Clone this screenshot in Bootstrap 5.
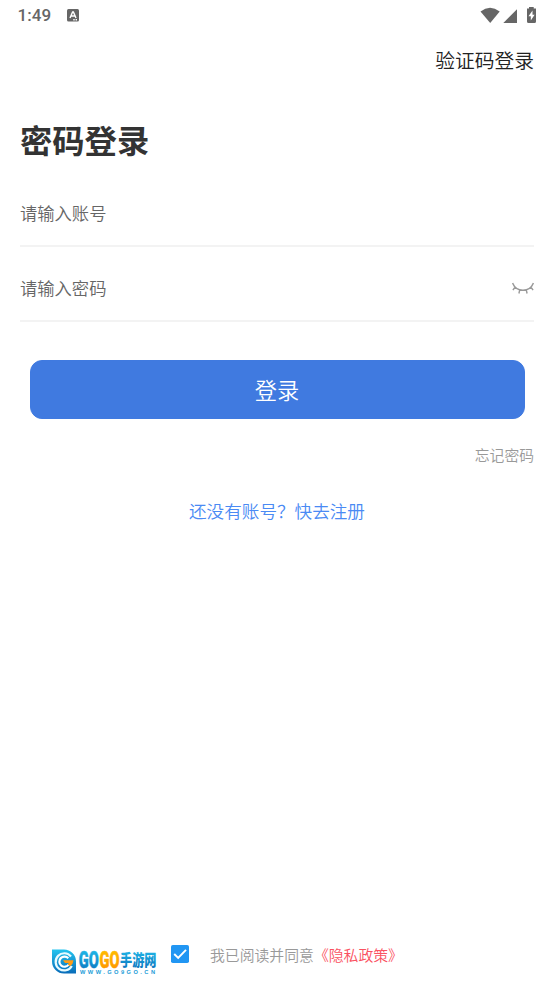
<!DOCTYPE html>
<html lang="zh-CN">
<head>
<meta charset="utf-8">
<meta name="viewport" content="width=device-width, initial-scale=1">
<title>密码登录</title>
<link rel="stylesheet" href="https://cdn.jsdelivr.net/npm/bootstrap@5.3.0/dist/css/bootstrap.min.css">
<style>
body{font-family:"Noto Sans CJK SC",sans-serif;font-weight:350;color:#333;background:#fff}
.screen{height:984px;overflow:hidden}
.status-bar{height:31px;padding:0 17px 0 17.5px;color:#666}
.status-icons{margin-bottom:2px}
.clock{font:500 17px/31px Roboto,sans-serif;letter-spacing:.1px}
.form-area{padding:0 20px}
.code-login{font-size:19.75px;line-height:30px;margin-top:14px;color:#222}
.page-title{font-size:32.3px;line-height:48px;margin-top:40px;color:#333}
.field{height:75px;border-bottom:2px solid #f3f3f3}
.first-field{height:66px;margin-top:18px}
.second-field{padding-top:8px}
.field .form-control{font-size:17.3px;line-height:26px;font-weight:350;color:#666}
.field .form-control::placeholder{color:#666;opacity:1}
.field .form-control:focus{box-shadow:none}
.eye-closed{margin-top:2px}
.login-btn{margin:38px 9.5px 0;height:59px;border-radius:12px;font-size:22.2px;line-height:32px;font-weight:350;padding:0 0 1px;--bs-btn-bg:#407ae0;--bs-btn-border-color:#407ae0}
.forgot{font-size:14.8px;line-height:22px;margin-top:25px;color:#999}
.register{font-size:17.6px;line-height:26px;margin-top:32px;color:#4a8af4}
.agreement{height:40px;margin-bottom:4px;padding-left:51px;font-size:14.85px;color:#999}
.brand{margin-top:4px;overflow:visible}
.agree-check{width:18px;height:18px;margin:5px 21px 0 14px}
.agree-text{line-height:22px;margin-top:4px}
.policy{color:#fa5161}
</style>
<script src="https://cdn.jsdelivr.net/npm/bootstrap@5.3.0/dist/js/bootstrap.bundle.min.js"></script>
</head>
<body>
<div class="screen d-flex flex-column">
  <header class="status-bar d-flex align-items-center flex-shrink-0">
    <span class="clock">1:49</span>
    <svg class="ms-3" width="12" height="13" viewBox="0 0 12 13"><rect width="12" height="12.6" rx="1.5" fill="#666"/><path d="M3 9 5.6 3h.8L9 9M4 7h4M6.3 10.8h1.4M8.6 10.8H10" fill="none" stroke="#fff" stroke-width="1.4"/></svg>
    <svg class="status-icons ms-auto" width="57" height="18" viewBox="0 0 57 18"><g fill="#666"><path d="M.5 5.4Q10 -1.8 19.7 5.4L10.2 17z"/><path d="M23.3 17 37 3.2V17z"/><path d="M49 2.6V1h4.7v1.6H56V15.5Q56 17 54.5 17h-6Q47 17 47 15.5V2.6z"/></g><path d="m52.5 4.5-4 5.8h2.3v4.2l3.8-5.8h-2.1z" fill="#fff"/></svg>
  </header>
  <main class="d-flex flex-column flex-grow-1">
    <section class="form-area d-flex flex-column">
      <a class="code-login align-self-end text-decoration-none" href="#">验证码登录</a>
      <h1 class="page-title fw-bold mb-0">密码登录</h1>
      <form class="d-flex flex-column">
        <div class="field first-field d-flex align-items-center">
          <input class="form-control border-0 p-0 bg-transparent" type="text" placeholder="请输入账号" aria-label="账号">
        </div>
        <div class="field second-field d-flex align-items-center">
          <input class="form-control border-0 p-0 bg-transparent" type="password" placeholder="请输入密码" aria-label="密码">
          <svg class="eye-closed flex-shrink-0" width="22" height="13" viewBox="0 0 22 13" fill="none" stroke="#999" stroke-width="1.4"><path d="M.6 1C2.2 5 6 8.2 11 8.2S19.8 5 21.4 1M3.2 5 .9 8.2M18.8 5l2.3 3.2M7.8 7.7 6.9 11.5M14.2 7.7l.9 3.8"/></svg>
        </div>
        <button class="login-btn btn btn-primary" type="button">登录</button>
      </form>
      <a class="forgot align-self-end text-decoration-none" href="#">忘记密码</a>
      <a class="register align-self-center text-decoration-none" href="#">还没有账号？快去注册</a>
    </section>
    <footer class="agreement d-flex mt-auto">
      <svg class="brand flex-shrink-0" width="106" height="36" viewBox="0 0 106 36" role="img" aria-label="GOGO手游网">
        <defs>
          <linearGradient id="blue" x1="0" y1="0" x2="0" y2="1"><stop stop-color="#24c4ef"/><stop offset="1" stop-color="#086cb9"/></linearGradient>
          <linearGradient id="gold" x1="0" y1="0" x2="0" y2="1"><stop stop-color="#ffc400"/><stop offset="1" stop-color="#ff8d00"/></linearGradient>
        </defs>
        <path d="M1 5.5H13A12 12 0 0 1 25 17.5V29.5H13A12 12 0 0 1 1 17.5z" fill="url(#blue)"/>
        <path d="M20 12.5A8.6 8.6 0 1 0 20.8 22" fill="none" stroke="#e8fbff" stroke-width="2.2"/>
        <path d="M17.3 14.3A5.1 5.1 0 1 0 17.7 20.5" fill="none" stroke="#fff" stroke-width="2.2"/>
        <path d="M12 16.2h10.5q-.4 4-3.3 6l-2.4-1.7 1-1.5H14z" fill="#ff9c16"/>
        <g font-family="Roboto, sans-serif" font-weight="900" font-size="23.5" stroke-width=".5">
          <text x="27.7" y="24.4" textLength="20" lengthAdjust="spacingAndGlyphs" fill="url(#blue)" stroke="url(#blue)">GO</text>
          <text x="48.6" y="24.4" textLength="20" lengthAdjust="spacingAndGlyphs" fill="url(#gold)" stroke="url(#gold)">GO</text>
        </g>
        <text x="69" y="22" font-family="Noto Sans CJK SC, sans-serif" font-weight="900" font-size="16" textLength="36.5" lengthAdjust="spacingAndGlyphs" fill="url(#blue)">手游网</text>
        <text x="29" y="29.9" font-family="Liberation Sans, sans-serif" font-weight="700" font-size="5.7" textLength="75" fill="#219bd7">WWW.GO9GO.CN</text>
      </svg>
      <svg class="agree-check flex-shrink-0" viewBox="0 0 18 18" role="checkbox" aria-checked="true" aria-label="同意"><rect width="18" height="18" rx="1.8" fill="#2196f3"/><path d="m3.2 9 4 4 7.8-8.2" fill="none" stroke="#fff" stroke-width="1.9"/></svg>
      <span class="agree-text text-nowrap">我已阅读并同意<a class="policy text-decoration-none" href="#">《隐私政策》</a></span>
    </footer>
  </main>
</div>
</body>
</html>
